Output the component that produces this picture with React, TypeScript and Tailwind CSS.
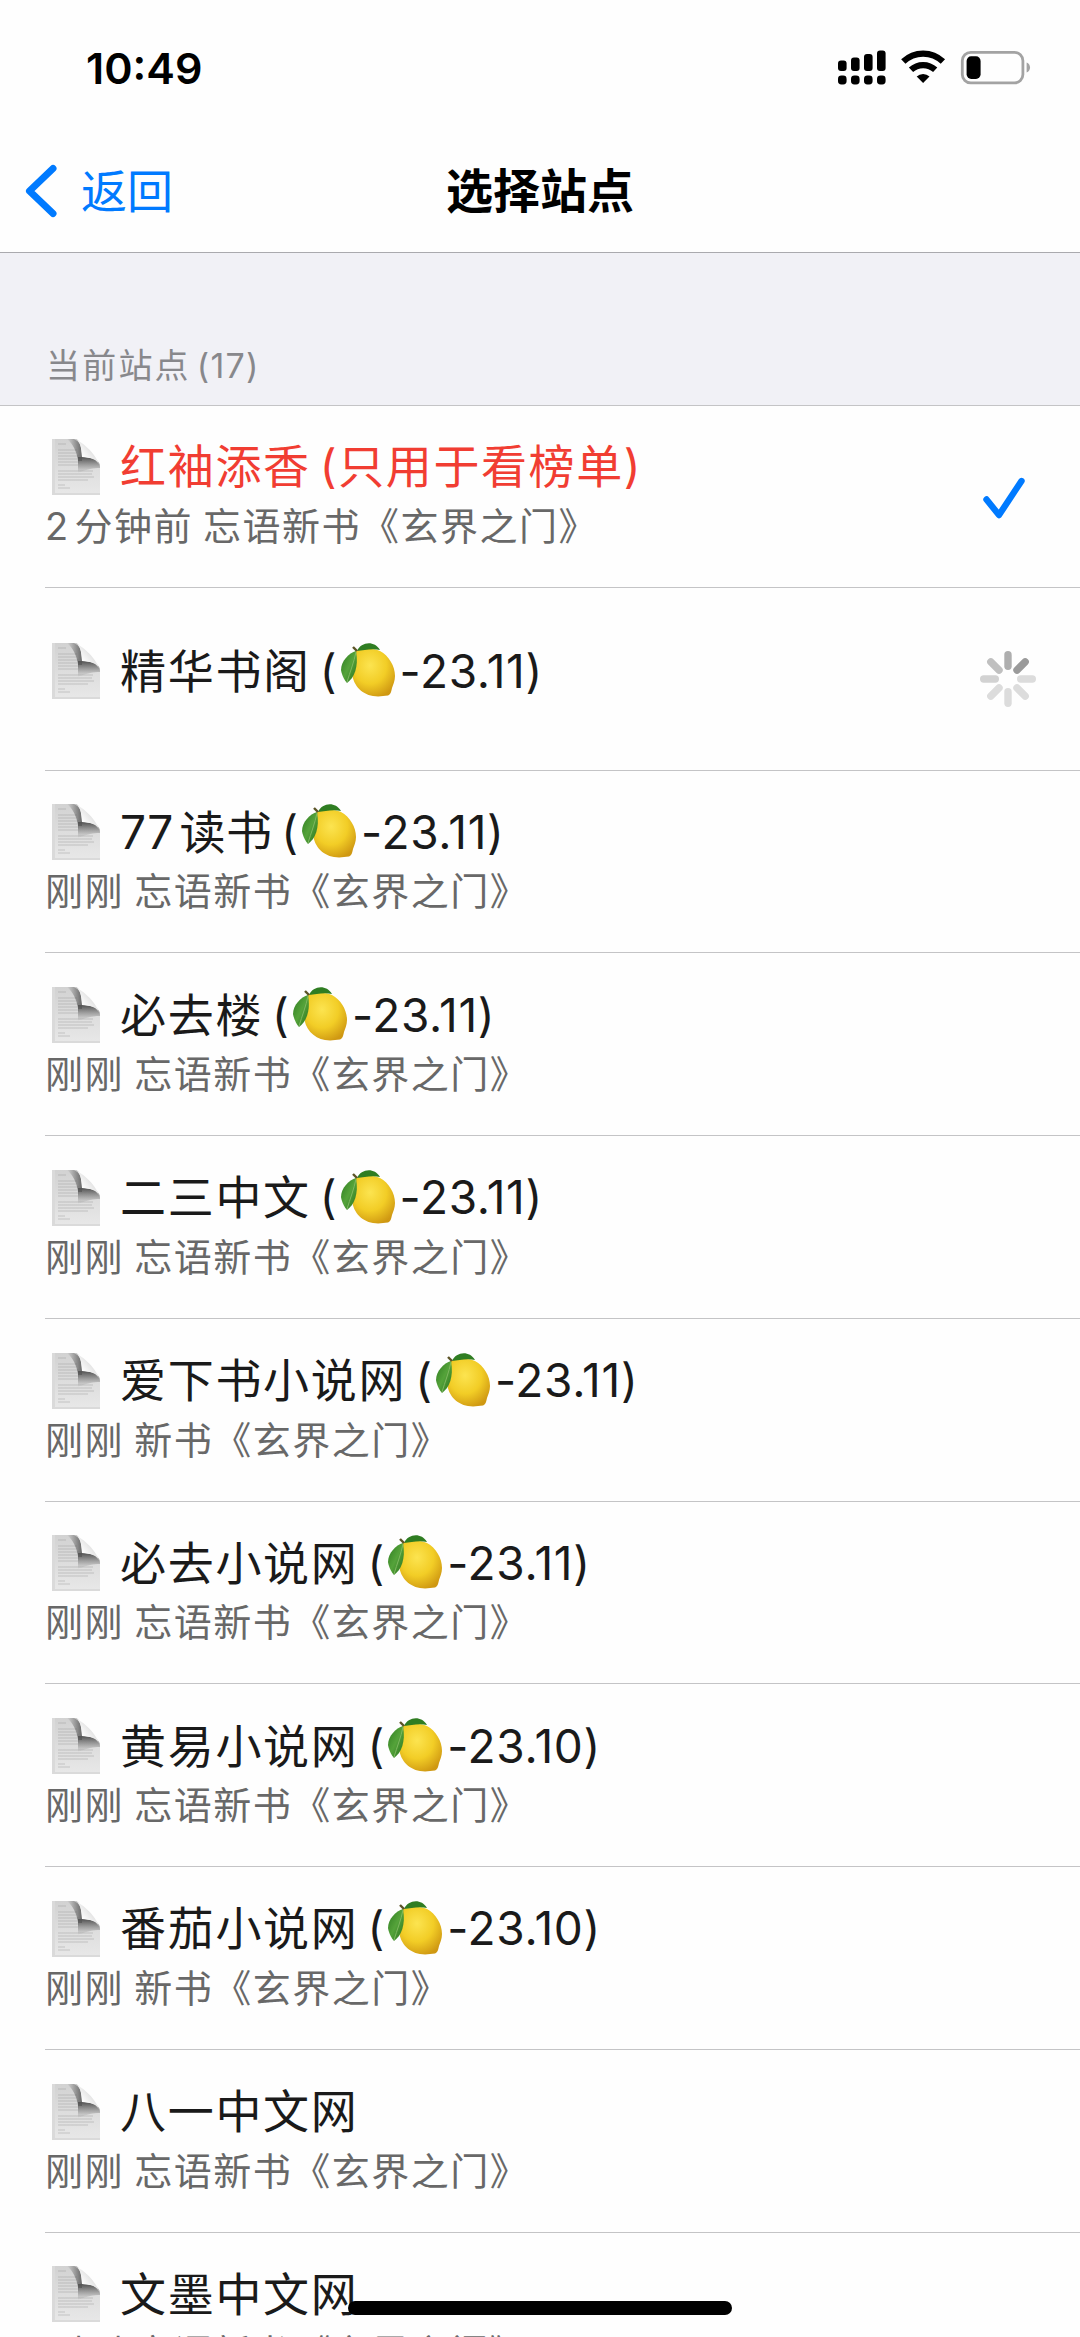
interface Site {
  name: string
  version?: string
  detail?: string
  status?: 'selected' | 'loading'
}

const SITES: Site[] = [
  { name: '红袖添香', detail: '2分钟前 忘语新书《玄界之门》', status: 'selected' },
  { name: '精华书阁', version: '-23.11)', status: 'loading' },
  { name: '77读书', version: '-23.11)', detail: '刚刚 忘语新书《玄界之门》' },
  { name: '必去楼', version: '-23.11)', detail: '刚刚 忘语新书《玄界之门》' },
  { name: '二三中文', version: '-23.11)', detail: '刚刚 忘语新书《玄界之门》' },
  { name: '爱下书小说网', version: '-23.11)', detail: '刚刚 新书《玄界之门》' },
  { name: '必去小说网', version: '-23.11)', detail: '刚刚 忘语新书《玄界之门》' },
  { name: '黄易小说网', version: '-23.10)', detail: '刚刚 忘语新书《玄界之门》' },
  { name: '番茄小说网', version: '-23.10)', detail: '刚刚 新书《玄界之门》' },
  { name: '八一中文网', detail: '刚刚 忘语新书《玄界之门》' },
  { name: '文墨中文网', detail: '刚刚 忘语新书《玄界之门》' },
]

function StatusIcons() {
  const bars = [
    { x: 0, y: 10.5 },
    { x: 13, y: 7.5 },
    { x: 26, y: 4 },
    { x: 39, y: 0.5 },
  ]
  return (
    <svg width="194" height="36" viewBox="0 0 194 36" fill="none">
      {bars.map(({ x, y }) => (
        <g key={x} fill="#000">
          <rect x={x} y={y} width="8.6" height={21 - y} rx="3" />
          <rect x={x} y="25.5" width="8.6" height="9" rx="3.4" />
        </g>
      ))}
      <g stroke="#000" strokeWidth="6.2">
        <path d="M65.3 11.6a28.5 28.5 0 0 1 39.6 0" />
        <path d="M73 19.8a17.8 17.8 0 0 1 24.2 0" />
      </g>
      <path d="M85.1 33l-6.4-6.4a9.2 9.2 0 0 1 12.8 0z" fill="#000" />
      <rect x="124.3" y="2.3" width="60.6" height="30.6" rx="8.5" stroke="#a3a3a3" strokeWidth="2.8" />
      <rect x="128.6" y="6.3" width="14" height="22.6" rx="4.6" fill="#000" />
      <path d="M188.6 12.6c4.6 1.6 4.6 8.4 0 10z" fill="#a3a3a3" />
    </svg>
  )
}

function PageIcon() {
  return (
    <svg width="48" height="56" viewBox="0 0 48 56" fill="none" className="shrink-0">
      <defs>
        <linearGradient id="paper" x1="0" y1="0" x2="0" y2="1">
          <stop offset="0" stopColor="#d2d2d2" />
          <stop offset="1" stopColor="#e8e8e8" />
        </linearGradient>
        <linearGradient id="shadeX" x1="15" y1="0" x2="30" y2="0" gradientUnits="userSpaceOnUse">
          <stop offset="0" stopColor="#555" stopOpacity="0" />
          <stop offset="1" stopColor="#555" stopOpacity=".85" />
        </linearGradient>
        <linearGradient id="shadeY" x1="0" y1="19" x2="0" y2="34" gradientUnits="userSpaceOnUse">
          <stop offset="0" stopColor="#555" stopOpacity=".95" />
          <stop offset="1" stopColor="#777" stopOpacity="0" />
        </linearGradient>
        <linearGradient id="curl" x1="29" y1="17" x2="40" y2="8" gradientUnits="userSpaceOnUse">
          <stop offset="0" stopColor="#fff" />
          <stop offset="1" stopColor="#dcdcdc" />
        </linearGradient>
      </defs>
      <path d="M0 0H22C27 0 29 4 30 18C42 19 48 21 48 28V56H0Z" fill="url(#paper)" />
      <path d="M0 0h3v56H0zM0 54h48v2H0z" fill="#dadada" />
      <path
        d="M6 5h8M6 11h19M6 14h18M6 17h21M6 20h19M6 23h21M6 26h20M6 32h35M6 35h34M6 38h36M6 41h30M6 46h7M6 49h12"
        stroke="#999"
        strokeWidth="1"
        opacity=".45"
      />
      <path d="M15 0H22C27 0 29 4 30 18V22H26C25 13 21 5 15 0Z" fill="url(#shadeX)" />
      <path d="M26 18H30C42 19 48 21 48 28V29C42 29 35 30 26 34Z" fill="url(#shadeY)" />
      <path d="M22 0C28 1 43 13 48 27C45 20 38 18 30 18C30 8 28 2 22 0Z" fill="url(#curl)" />
    </svg>
  )
}

function LemonIcon() {
  return (
    <svg width="55" height="54" viewBox="0 0 55 54" fill="none" className="mr-1 mb-0.5 ml-1 shrink-0">
      <defs>
        <radialGradient id="lemon" cx=".42" cy=".35" r=".7">
          <stop offset="0" stopColor="#fce450" />
          <stop offset=".55" stopColor="#f2cd26" />
          <stop offset="1" stopColor="#cf9812" />
        </radialGradient>
        <linearGradient id="leaf" x1="0" y1="0" x2="1" y2="1">
          <stop offset="0" stopColor="#2c7a20" />
          <stop offset=".5" stopColor="#55a33a" />
          <stop offset="1" stopColor="#26701d" />
        </linearGradient>
      </defs>
      <path
        d="M15 8C22 5 32 5 39 8C48 13 54 23 54 33C54 38 52 42 51 45C50 49 50 51 47 52.5C42 53 38 54 32 53C20 51 11 41 11 28C11 20 11 12 15 8Z"
        fill="url(#lemon)"
      />
      <path d="M16 8C20 -1 33 -3 39 7C32 5 23 7 16 8Z" fill="#2f7d22" />
      <path d="M15 8C8 10 0 18 0 27C1 33 4 38 6 40C13 35 18 24 15 8Z" fill="url(#leaf)" />
      <path d="M15 9C13 19 9 29 6 39" stroke="#7fb860" strokeWidth="1" />
      <path d="M12 4l4 4" stroke="#5b5326" strokeWidth="2.4" />
    </svg>
  )
}

function Checkmark() {
  return (
    <svg width="44" height="44" viewBox="0 0 44 44" fill="none" className="mt-1 mr-[54px]">
      <path d="M4.5 23.5L17 39L39.5 5" stroke="#007aff" strokeWidth="6.4" strokeLinecap="round" strokeLinejoin="round" />
    </svg>
  )
}

function Spinner() {
  const shades = ['#aeaeae', '#9a9a9a', '#dcdcdc', '#dcdcdc', '#dcdcdc', '#dcdcdc', '#d2d2d2', '#c0c0c0']
  return (
    <svg width="56" height="56" viewBox="0 0 56 56" className="mr-11">
      {shades.map((color, i) => (
        <rect key={i} x="24.3" y="0" width="7.4" height="19" rx="3.7" fill={color} transform={`rotate(${i * 45} 28 28)`} />
      ))}
    </svg>
  )
}

function SiteRow({ site }: { site: Site }) {
  const selected = site.status === 'selected'
  // names that start with digits are set tighter
  const latin = /^\d/.test(site.name)
  return (
    <li className="ml-[45px] flex h-[182.75px] shrink-0 items-center justify-between border-b border-[#c4c4c6]">
      <div className={`flex flex-col ${site.detail ? '' : 'pb-[15px]'}`}>
        <div
          className={`ml-[7px] flex h-14 items-center text-[46px] whitespace-pre ${
            selected ? 'text-[#f13d32]' : 'text-[#1a1a1a]'
          }`}
        >
          <PageIcon />
          <span className={`ml-5 [text-autospace:normal] ${latin ? 'tracking-[0.4px]' : 'tracking-[1.7px]'}`}>{site.name}</span>
          {selected && <span className="ml-[9px] tracking-[1.6px]">(只用于看榜单)</span>}
          {site.version && (
            <>
              <span className="ml-[9px]">(</span>
              <LemonIcon />
              <span className="tracking-[0.7px]">{site.version}</span>
            </>
          )}
        </div>
        {site.detail && (
          <p className="mt-1 h-[54px] text-[38px] leading-[54px] tracking-[1.5px] [word-spacing:-2px] whitespace-pre text-[#686868] [text-autospace:normal]">
            {site.detail}
          </p>
        )}
      </div>
      {selected && <Checkmark />}
      {site.status === 'loading' && <Spinner />}
    </li>
  )
}

export default function App() {
  return (
    <div className="relative flex h-[2337px] w-[1080px] flex-col overflow-hidden bg-[#fefefe] font-['Inter','Noto_Sans_CJK_SC',sans-serif]">
      <div className="flex h-[136px] shrink-0 items-center justify-between pr-[48px] pl-[86px]">
        <span className="pt-px text-[43px] font-semibold">10:49</span>
        <StatusIcons />
      </div>
      <header className="grid h-[117px] shrink-0 grid-cols-3 items-center border-b border-[#aaaaae] px-6 pb-1.5">
        <button className="flex items-center text-[46px] text-[#007aff]">
          <svg width="34" height="54" viewBox="0 0 34 54" fill="none">
            <path d="M29 4.5L5.5 27L29 49.5" stroke="currentColor" strokeWidth="7" strokeLinecap="round" strokeLinejoin="round" />
          </svg>
          <span className="ml-[23px]">返回</span>
        </button>
        <h1 className="text-center text-[47px] font-bold">选择站点</h1>
      </header>
      <h2 className="flex h-[153px] shrink-0 items-end border-b border-[#c4c4c6] bg-[#f1f1f6] pb-3.5 pl-[46px] text-[34px] tracking-[2.2px] text-[#88888c]">
        <span>当前站点</span>
        <span className="ml-1.5 tracking-[1.2px]">(17)</span>
      </h2>
      <ul className="-mt-px flex flex-col">
        {SITES.map((site) => (
          <SiteRow key={site.name} site={site} />
        ))}
      </ul>
      <div className="absolute top-[2301px] left-[348px] h-3.5 w-96 rounded-full bg-black" />
    </div>
  )
}
